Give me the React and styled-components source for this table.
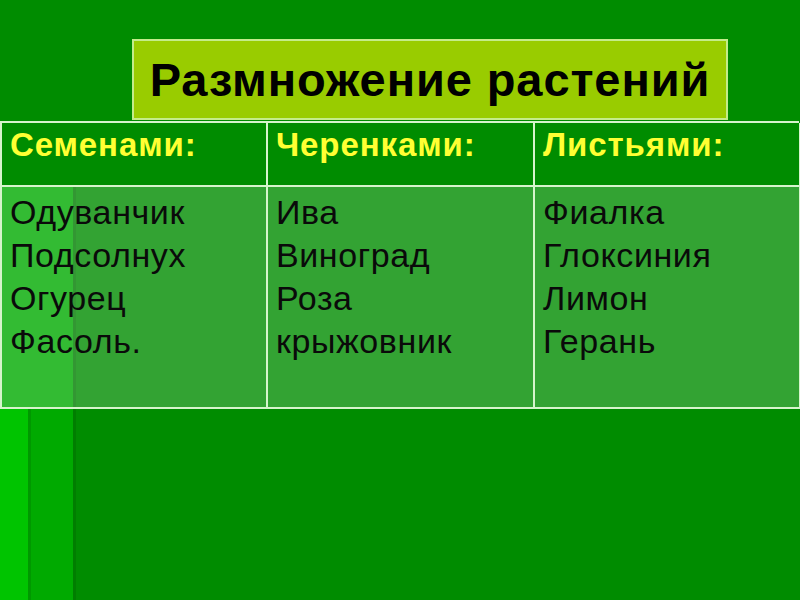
import React from 'react';
import styled, { createGlobalStyle } from 'styled-components';

const columns = [
  { title: 'Семенами:', items: ['Одуванчик', 'Подсолнух', 'Огурец', 'Фасоль.'] },
  { title: 'Черенками:', items: ['Ива', 'Виноград', 'Роза', 'крыжовник'] },
  { title: 'Листьями:', items: ['Фиалка', 'Глоксиния', 'Лимон', 'Герань'] },
];

const GlobalStyle = createGlobalStyle`
  html, body {
    margin: 0;
    padding: 0;
  }
  body {
    font-family: "Liberation Sans", Arial, sans-serif;
  }
`;

// the slide's decorative stripes sit in the background, under the table
const Slide = styled.div`
  width: 800px;
  height: 600px;
  overflow: hidden;
  display: flex;
  flex-direction: column;
  padding-top: 39px;
  box-sizing: border-box;
  background:
    linear-gradient(
        to right,
        #00c400 0 28px,
        #009800 28px 31px,
        #00aa00 31px 73px,
        #007e00 73px 76px,
        transparent 76px
      )
      0 408px / 100% 100% no-repeat,
    linear-gradient(
        to right,
        #00aa00 0 73px,
        #007e00 73px 76px,
        transparent 76px
      )
      0 160px / 100% 100% no-repeat,
    #008c00;
`;

const TitleBox = styled.div`
  margin-left: 132px;
  width: 596px;
  height: 81px;
  box-sizing: border-box;
  border: 2px solid #c4ec8a;
  background: #99cc00;
  display: flex;
  align-items: center;
  justify-content: center;
`;

const Title = styled.h1`
  margin: 0;
  font-size: 47px;
  font-weight: 700;
  color: #000;
  letter-spacing: 0.9px;
`;

const Table = styled.div`
  margin-top: 1px;
  width: 799px;
  display: grid;
  grid-template-columns: 266px 267px 266px;
  grid-template-rows: 64px 222px;
  border-top: 2px solid #d6f4cc;
  border-left: 2px solid #d6f4cc;
  box-sizing: border-box;
`;

const HeadCell = styled.div`
  border-right: 2px solid #d6f4cc;
  border-bottom: 2px solid #d6f4cc;
  background: #008c00;
  padding: 4px 0 0 8px;
  font-size: 33px;
  line-height: 36px;
  font-weight: 700;
  letter-spacing: 0.9px;
  color: #ffff33;
`;

const BodyCell = styled.div`
  border-right: 2px solid #d6f4cc;
  border-bottom: 2px solid #d6f4cc;
  background: rgba(255, 255, 255, 0.2);
  padding: 4px 0 0 8px;
  font-size: 34px;
  line-height: 43px;
  letter-spacing: 0.6px;
  color: #0a0a0a;
`;

const Item = styled.div``;

export default function App() {
  return (
    <>
      <GlobalStyle />
      <Slide>
        <TitleBox>
          <Title>Размножение растений</Title>
        </TitleBox>
        <Table>
          {columns.map((col) => (
            <HeadCell key={col.title}>{col.title}</HeadCell>
          ))}
          {columns.map((col) => (
            <BodyCell key={col.title}>
              {col.items.map((item) => (
                <Item key={item}>{item}</Item>
              ))}
            </BodyCell>
          ))}
        </Table>
      </Slide>
    </>
  );
}
